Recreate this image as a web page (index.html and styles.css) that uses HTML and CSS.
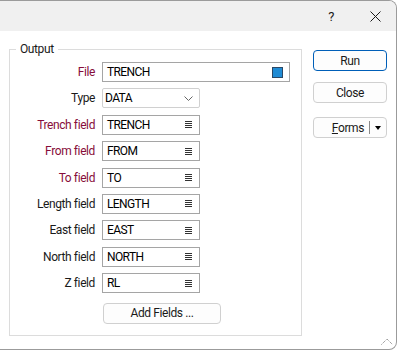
FILE: index.html
```html
<!DOCTYPE html>
<html>

<head>
    <title>Trench Output</title>
    <meta charset="utf-8">
    <link rel="stylesheet" href="styles.css">
</head>

<body>

    <div class="window">
        <div class="titlebar">
            <span class="tbtn">?</span>
            <span class="tbtn luk">
                <svg width="11" height="11" viewBox="0 0 11 11"><path d="M0.5 0.5 L10.5 10.5 M10.5 0.5 L0.5 10.5" stroke="#1a1a1a" stroke-width="1" fill="none"/></svg>
            </span>
        </div>

        <div class="main">
            <fieldset class="group">
                <legend>Output</legend>
                <div class="felter">
                    <label class="rod">File</label>
                    <div class="boks bred">TRENCH <span class="fil"></span></div>

                    <label>Type</label>
                    <div class="boks combo">DATA
                        <svg width="9" height="5" viewBox="0 0 9 5"><path d="M0.5 0.5 L4.5 4.5 L8.5 0.5" stroke="#666" fill="none"/></svg>
                    </div>

                    <label class="rod">Trench field</label>
                    <div class="boks">TRENCH <svg class="liste" width="7" height="7" viewBox="0 0 7 7"><path d="M0 0.5 H7 M0 2.5 H7 M0 4.5 H7 M0 6.5 H7" stroke="#333" fill="none"/></svg></div>

                    <label class="rod">From field</label>
                    <div class="boks">FROM <svg class="liste" width="7" height="7" viewBox="0 0 7 7"><path d="M0 0.5 H7 M0 2.5 H7 M0 4.5 H7 M0 6.5 H7" stroke="#333" fill="none"/></svg></div>

                    <label class="rod">To field</label>
                    <div class="boks">TO <svg class="liste" width="7" height="7" viewBox="0 0 7 7"><path d="M0 0.5 H7 M0 2.5 H7 M0 4.5 H7 M0 6.5 H7" stroke="#333" fill="none"/></svg></div>

                    <label>Length field</label>
                    <div class="boks">LENGTH <svg class="liste" width="7" height="7" viewBox="0 0 7 7"><path d="M0 0.5 H7 M0 2.5 H7 M0 4.5 H7 M0 6.5 H7" stroke="#333" fill="none"/></svg></div>

                    <label>East field</label>
                    <div class="boks">EAST <svg class="liste" width="7" height="7" viewBox="0 0 7 7"><path d="M0 0.5 H7 M0 2.5 H7 M0 4.5 H7 M0 6.5 H7" stroke="#333" fill="none"/></svg></div>

                    <label>North field</label>
                    <div class="boks">NORTH <svg class="liste" width="7" height="7" viewBox="0 0 7 7"><path d="M0 0.5 H7 M0 2.5 H7 M0 4.5 H7 M0 6.5 H7" stroke="#333" fill="none"/></svg></div>

                    <label>Z field</label>
                    <div class="boks">RL <svg class="liste" width="7" height="7" viewBox="0 0 7 7"><path d="M0 0.5 H7 M0 2.5 H7 M0 4.5 H7 M0 6.5 H7" stroke="#333" fill="none"/></svg></div>

                    <button class="knap tilfoej">Add Fields ...</button>
                </div>
            </fieldset>

            <div class="side">
                <button class="knap valgt">Run</button>
                <button class="knap">Close</button>
                <button class="knap forms"><span><u>F</u>orms</span><i class="skille"></i><i class="pil"></i></button>
            </div>
        </div>

        <div class="greb">
            <svg width="12" height="7" viewBox="0 0 12 7"><path d="M0.5 6.5 L6 1 L11.5 6.5" stroke="#777" stroke-dasharray="1 1" fill="none"/></svg>
        </div>
    </div>

</body>

</html>
```

FILE: styles.css
```css
body {
    margin: 0;
    background-color: #ffffff;
    font-family: Roboto, sans-serif;
    font-size: 12px;
    letter-spacing: -0.4px;
    color: #1a1a1a;
}

.window {
    position: relative;
    width: 397px;
    height: 350px;
    box-sizing: border-box;
    border: 1px solid #9b9b9b;
    border-left: none;
    border-radius: 0 8px 8px 0;
    background-color: #ffffff;
    overflow: hidden;
}

.titlebar {
    height: 30px;
    background-color: #f0f0f0;
    display: flex;
    justify-content: flex-end;
    align-items: center;
}

.tbtn {
    width: 46px;
    text-align: center;
    font-size: 13px;
}

.luk {
    width: 42px;
    display: flex;
    justify-content: center;
}

.main {
    display: flex;
    padding: 10px 0 0 9px;
}

.group {
    width: 293px;
    box-sizing: border-box;
    margin: 0;
    padding: 5px 10px 15px 0;
    border: 1px solid #dcdcdc;
}

.group legend {
    margin-left: 6px;
    padding: 0 4px;
    line-height: 16px;
}

.felter {
    display: grid;
    grid-template-columns: 85px auto;
    grid-auto-rows: 20px;
    column-gap: 7px;
    row-gap: 6.4px;
    align-items: center;
}

.felter label {
    text-align: right;
    line-height: 20px;
}

.rod {
    color: #870d3a;
}

.boks {
    width: 98px;
    height: 20px;
    box-sizing: border-box;
    border: 1px solid #a5a5a5;
    display: flex;
    align-items: center;
    justify-content: space-between;
    padding: 0 7px 0 4px;
    color: #000000;
    letter-spacing: -0.6px;
}

.bred {
    width: 188px;
    padding-right: 6px;
}

.combo {
    border-color: #d0d0d0;
    border-radius: 2px;
    padding-left: 2px;
    padding-right: 6px;
}

.fil {
    width: 11px;
    height: 11px;
    box-sizing: border-box;
    background-color: #1f8bd4;
    border: 1px solid #2a4866;
}

.knap {
    height: 21px;
    box-sizing: border-box;
    border: 1px solid #d0d0d0;
    border-radius: 4px;
    background-color: #fdfdfd;
    font-family: Roboto, sans-serif;
    font-size: 12px;
    letter-spacing: -0.4px;
    color: #1a1a1a;
    padding: 0;
}

.tilfoej {
    grid-column: 2;
    width: 118px;
    margin: 3px 0 0 1px;
    align-self: start;
}

.side {
    display: flex;
    flex-direction: column;
    margin-left: 11px;
    padding-top: 9px;
    width: 74px;
}

.side .knap {
    margin-bottom: 11px;
}

.side .knap + .knap + .knap {
    margin-top: 3px;
}

.valgt {
    border-color: #005fb8;
}

.forms {
    display: flex;
    align-items: center;
    justify-content: flex-end;
    padding-right: 5px;
}

.skille {
    width: 1px;
    height: 13px;
    background-color: #8a8a8a;
    margin: 0 5px;
}

.pil {
    width: 0;
    height: 0;
    border-top: 4px solid #000000;
    border-left: 3.5px solid transparent;
    border-right: 3.5px solid transparent;
}

.greb {
    position: absolute;
    right: 3px;
    bottom: 4px;
    line-height: 0;
}
```
